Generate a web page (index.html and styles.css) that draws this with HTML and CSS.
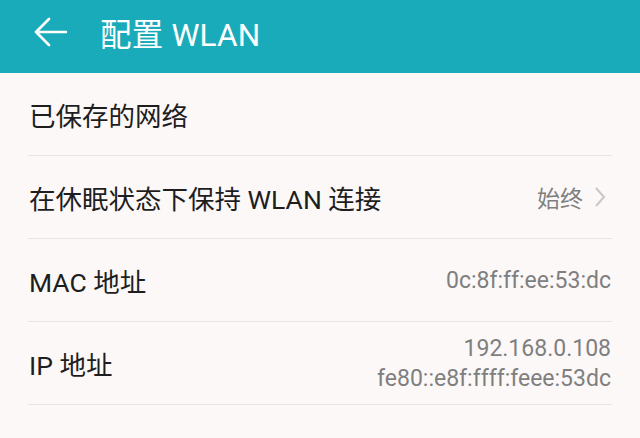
FILE: index.html
```html
<!DOCTYPE html>
<html lang="zh-CN">
<head>
<meta charset="utf-8">
<link rel="stylesheet" href="styles.css">
</head>
<body>
<header class="appbar">
  <svg class="back" width="34" height="30" viewBox="0 0 34 30"><path d="M33 15H3M16 2L3 15l13 13" fill="none" stroke="#fff" stroke-width="2.6" stroke-linecap="round" stroke-linejoin="round"/></svg>
  <h1 class="title">配置 WLAN</h1>
</header>
<main class="list">
  <div class="row"><span class="label">已保存的网络</span></div>
  <div class="row"><span class="label">在休眠状态下保持 WLAN 连接</span>
    <span class="value">始终<svg class="chev" width="12" height="22" viewBox="0 0 12 22"><path d="M2 2l8 9-8 9" fill="none" stroke="#c8c6c6" stroke-width="2"/></svg></span></div>
  <div class="row"><span class="label">MAC 地址</span><span class="value mono">0c:8f:ff:ee:53:dc</span></div>
  <div class="row"><span class="label">IP 地址</span><span class="value mono stack"><span>192.168.0.108</span><span>fe80::e8f:ffff:feee:53dc</span></span></div>
</main>
</body>
</html>
```
FILE: styles.css
```css
html, body { margin: 0; padding: 0; }
body {
  width: 640px; height: 438px; overflow: hidden;
  background: #fcf8f8;
  font-family: Roboto, "Noto Sans CJK SC", sans-serif;
}
.appbar {
  height: 63px; padding-bottom: 10px; background: #1aabbb;
  display: flex; align-items: center;
  padding-left: 33px;
}
.title {
  margin: 0 0 0 33px; color: #fff;
  font-weight: 400; font-size: 31.5px; letter-spacing: 0.2px;
}
.list { padding: 0 28px; }
.row {
  height: 82px; border-bottom: 1px solid #e8e4e4;
  display: flex; align-items: center; justify-content: space-between;
  padding: 0 1px 0 1px;
}
.label { font-size: 26.5px; color: #1e1e1e; }
.value { color: #7f7f7f; font-size: 23px; display: flex; align-items: center; }
.chev { margin-left: 11px; margin-right: 5px; }
.stack { flex-direction: column; align-items: flex-end; line-height: 30px; padding-top: 2px; }
```
